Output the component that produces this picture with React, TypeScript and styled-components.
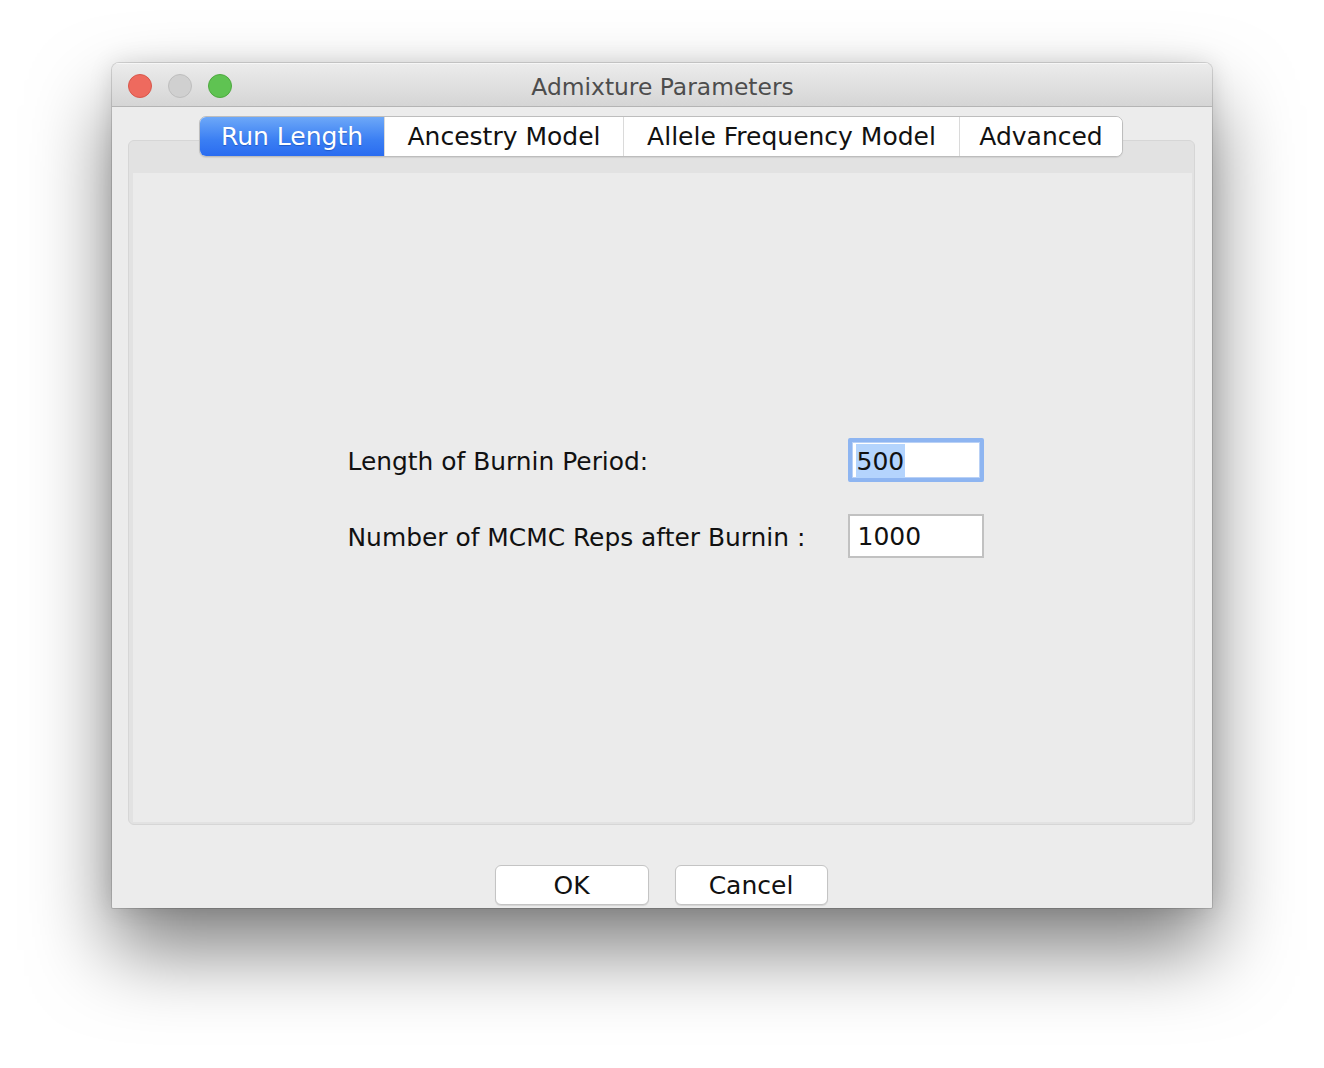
import React from "react";
import styled, { createGlobalStyle } from "styled-components";

const Global = createGlobalStyle`
  html, body { margin: 0; padding: 0; background: #ffffff; }
  body { font-family: "DejaVu Sans", "Liberation Sans", sans-serif; }
`;

const Page = styled.div`
  width: 1324px;
  height: 1068px;
  padding: 63px 0 0 112px;
  box-sizing: border-box;
`;

const Window = styled.div`
  width: 1100px;
  height: 845px;
  display: flex;
  flex-direction: column;
  background: #ececec;
  border-radius: 7px 7px 1px 1px;
  box-shadow: 0 0 0 1px rgba(0, 0, 0, 0.13), 0 0 24px rgba(0, 0, 0, 0.12),
    0 42px 80px rgba(0, 0, 0, 0.5);
  overflow: hidden;
`;

const TitleBar = styled.div`
  position: relative;
  height: 43px;
  flex: none;
  display: flex;
  align-items: center;
  justify-content: center;
  background: linear-gradient(#ececec, #d5d5d5);
  border-bottom: 1px solid #b4b4b4;
  box-shadow: inset 0 1px 0 #f6f6f6;
`;

const Lights = styled.div`
  position: absolute;
  left: 16px;
  top: 11px;
  display: flex;
  gap: 16px;
`;

const Light = styled.span<{ $fill: string; $edge: string }>`
  width: 24px;
  height: 24px;
  border-radius: 50%;
  box-sizing: border-box;
  background: ${(p) => p.$fill};
  border: 1px solid ${(p) => p.$edge};
`;

const Title = styled.div`
  font-size: 23.4px;
  color: #4d4d4d;
  margin: 4px 0 0 1px;
`;

const Body = styled.div`
  flex: 1;
  display: flex;
  flex-direction: column;
  padding: 9px 17px 3px 16px;
`;

const TabRow = styled.div`
  position: relative;
  z-index: 1;
  display: flex;
  justify-content: center;
  padding-right: 1px;
`;

const TabBar = styled.div`
  display: flex;
  height: 41px;
  box-sizing: border-box;
  border: 1px solid #bdbdbd;
  border-radius: 7px;
  background: #ffffff;
  overflow: hidden;
  box-shadow: 0 1px 1px rgba(0, 0, 0, 0.08);
`;

const Tab = styled.div<{ $active?: boolean; $w: number }>`
  width: ${(p) => p.$w}px;
  box-sizing: border-box;
  display: flex;
  align-items: center;
  justify-content: center;
  font-size: 25px;
  color: ${(p) => (p.$active ? "#ffffff" : "#111111")};
  background: ${(p) =>
    p.$active ? "linear-gradient(#6da8f8, #3a7ef3 60%, #2a6cf0)" : "#ffffff"};
  text-shadow: ${(p) => (p.$active ? "0 1px 1px rgba(0,40,120,0.35)" : "none")};
  border-left: 1px solid ${(p) => (p.$active ? "transparent" : "#dadada")};
  &:first-child {
    border-left: none;
  }
`;

const Panel = styled.div`
  margin-top: -17px;
  height: 685px;
  flex: none;
  box-sizing: border-box;
  display: flex;
  padding: 32px 2px 2px 4px;
  background: #e2e2e2;
  border: 1px solid #d6d6d6;
  border-radius: 6px;
`;

const PanelInner = styled.div`
  flex: 1;
  background: #ebebeb;
  display: flex;
  align-items: center;
  justify-content: center;
`;

const Form = styled.div`
  display: grid;
  grid-template-columns: 500px 136px;
  row-gap: 32px;
  align-items: center;
  margin: 0 0 0 6px;
`;

const Label = styled.div`
  font-size: 24.9px;
  color: #111111;
  padding-top: 3px;
`;

const Field = styled.div<{ $focused?: boolean }>`
  height: 44px;
  box-sizing: border-box;
  background: #ffffff;
  display: flex;
  align-items: center;
  font-size: 25px;
  color: #111111;
  padding-top: 2px;
  border: ${(p) => (p.$focused ? "4px solid #8eb5f1" : "2px solid #c1c1c1")};
  border-radius: ${(p) => (p.$focused ? "2px" : "0")};
  padding-left: ${(p) => (p.$focused ? "4px" : "8px")};
  box-shadow: ${(p) => (p.$focused ? "inset 0 0 0 1px #b9d1f6" : "none")};
`;

const Selected = styled.span`
  background: #b4d4fd;
  padding: 3px 1px 2px 1px;
`;

const Buttons = styled.div`
  margin-top: 40px;
  display: flex;
  justify-content: center;
  gap: 26px;
  padding-right: 1px;
`;

const Button = styled.div<{ $w: number }>`
  width: ${(p) => p.$w}px;
  height: 40px;
  box-sizing: border-box;
  display: flex;
  align-items: center;
  justify-content: center;
  background: #ffffff;
  border: 1px solid #c4c4c4;
  border-radius: 6px;
  box-shadow: 0 1px 1px rgba(0, 0, 0, 0.1);
  font-size: 25px;
  color: #111111;
`;

export default function App() {
  return (
    <>
      <Global />
      <Page>
        <Window>
          <TitleBar>
            <Lights>
              <Light $fill="#ee6a5e" $edge="#d8574b" />
              <Light $fill="#d0d0d0" $edge="#bebebe" />
              <Light $fill="#5fc352" $edge="#4ea93f" />
            </Lights>
            <Title>Admixture Parameters</Title>
          </TitleBar>
          <Body>
            <TabRow>
              <TabBar>
                <Tab $active $w={184}>Run Length</Tab>
                <Tab $w={239}>Ancestry Model</Tab>
                <Tab $w={336}>Allele Frequency Model</Tab>
                <Tab $w={163}>Advanced</Tab>
              </TabBar>
            </TabRow>
            <Panel>
              <PanelInner>
                <Form>
                  <Label>Length of Burnin Period:</Label>
                  <Field $focused>
                    <Selected>500</Selected>
                  </Field>
                  <Label>Number of MCMC Reps after Burnin :</Label>
                  <Field>1000</Field>
                </Form>
              </PanelInner>
            </Panel>
            <Buttons>
              <Button $w={154}>OK</Button>
              <Button $w={153}>Cancel</Button>
            </Buttons>
          </Body>
        </Window>
      </Page>
    </>
  );
}
